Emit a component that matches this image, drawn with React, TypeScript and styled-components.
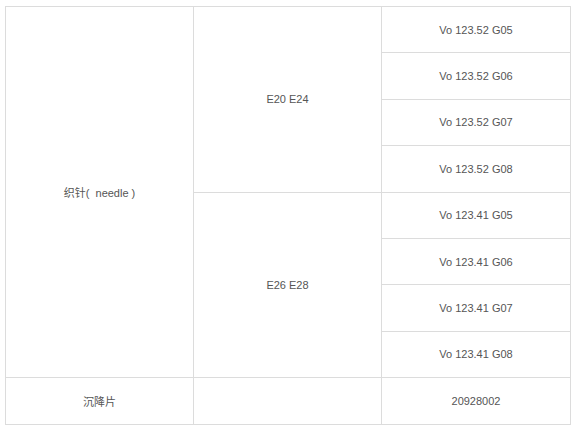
import * as React from 'react';
import styled, { createGlobalStyle } from 'styled-components';

const GlobalStyle = createGlobalStyle`
  body {
    margin: 0;
    padding: 6px 0 0 5px;
    background: #fff;
    font-family: 'Liberation Sans', Arial, 'Noto Sans CJK SC', sans-serif;
  }
`;

const SpecTable = styled.table`
  border-collapse: collapse;
  width: 566px;
  table-layout: fixed;
  color: #555;
  font-size: 11px;
`;

const Cell = styled.td`
  border: 1px solid #dcdcdc;
  height: 45.4px;
  padding: 0;
  text-align: center;
  vertical-align: middle;
`;

const parts: { size: string; codes: string[] }[] = [
  { size: 'E20 E24', codes: ['Vo 123.52 G05', 'Vo 123.52 G06', 'Vo 123.52 G07', 'Vo 123.52 G08'] },
  { size: 'E26 E28', codes: ['Vo 123.41 G05', 'Vo 123.41 G06', 'Vo 123.41 G07', 'Vo 123.41 G08'] },
];

const App: React.FC = () => {
  return (
    <>
      <GlobalStyle />
      <SpecTable>
        <colgroup>
          <col style={{ width: 188 }} />
          <col style={{ width: 188 }} />
          <col style={{ width: 189 }} />
        </colgroup>
        <tbody>
          {parts.map((group, gi) =>
            group.codes.map((code, ci) => (
              <tr key={code}>
                {gi === 0 && ci === 0 && <Cell rowSpan={8}>{'织针(\u00a0 needle\u00a0)'}</Cell>}
                {ci === 0 && <Cell rowSpan={4}>{group.size}</Cell>}
                <Cell>{code}</Cell>
              </tr>
            ))
          )}
          <tr>
            <Cell>沉降片</Cell>
            <Cell />
            <Cell>20928002</Cell>
          </tr>
        </tbody>
      </SpecTable>
    </>
  );
};

export default App;
